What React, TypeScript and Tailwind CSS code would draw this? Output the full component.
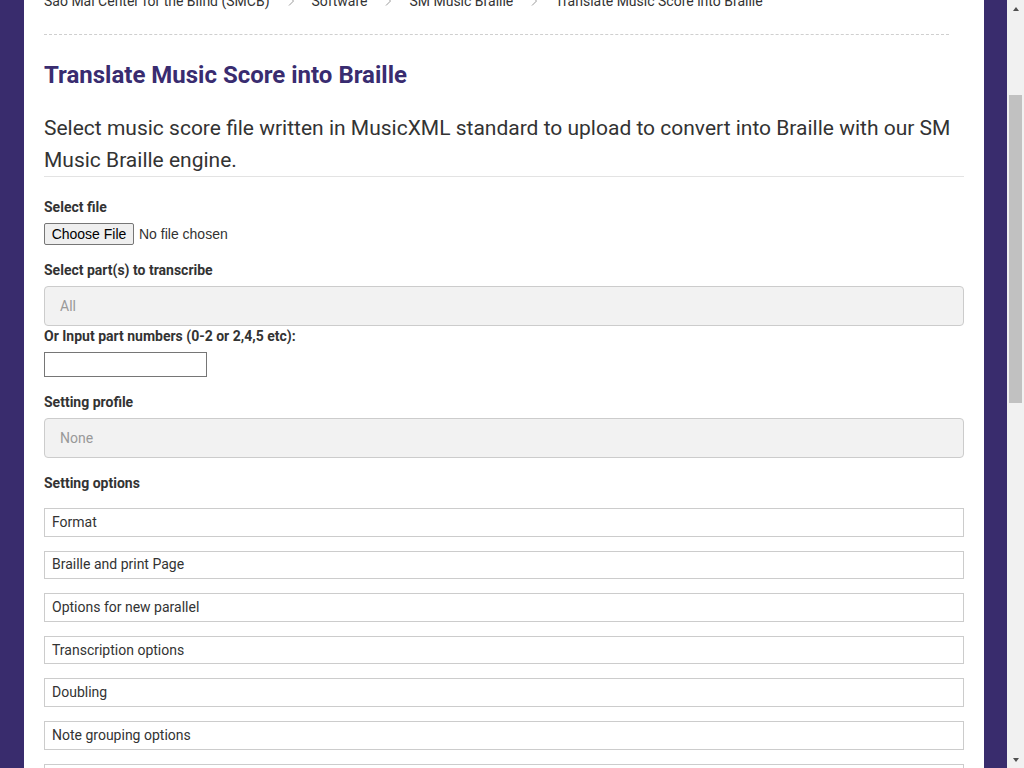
import React from "react";

const Chevron = () => (
  <svg width="10" height="10" viewBox="0 0 10 10" className="mx-[16px] shrink-0" fill="none">
    <path d="M3 0.5 L7.5 5 L3 9.5" stroke="#9a9a9a" strokeWidth="1" />
  </svg>
);

const Label = ({ children }: { children: React.ReactNode }) => (
  <div className="text-[14px] font-bold leading-[21px] mb-[5px] text-[#333]">{children}</div>
);

const options = [
  "Format",
  "Braille and print Page",
  "Options for new parallel",
  "Transcription options",
  "Doubling",
  "Note grouping options",
  "Other options",
];

export default function App() {
  return (
    <div className="flex h-[768px] w-[1024px] overflow-hidden bg-[#392c6d]">
      <div className="w-[24px] shrink-0" />
      <main className="w-[960px] shrink-0 bg-white px-[20px] font-['Roboto',sans-serif] text-[#333]">
        <nav className="-mt-[9px] mr-[15px] flex items-center border-b border-dashed border-[#cfcfcf] pb-[23px] text-[14px] leading-[20px] text-[#333]">
          <span>Sao Mai Center for the Blind (SMCB)</span>
          <Chevron />
          <span>Software</span>
          <Chevron />
          <span>SM Music Braille</span>
          <Chevron />
          <span>Translate Music Score into Braille</span>
        </nav>
        <h1 className="mt-[26px] text-[24px] font-bold leading-[29px] text-[#392c70]">
          Translate Music Score into Braille
        </h1>
        <p className="mt-[22px] border-b border-[#e3e3e3] text-[21px] leading-[32px] text-[#333]">
          Select music score file written in MusicXML standard to upload to convert into Braille with our SM Music Braille engine.
        </p>
        <div className="mt-[20px]">
          <Label>Select file</Label>
          <div className="flex items-center font-['Liberation_Sans',Arial,sans-serif] text-[14px]">
            <button className="flex h-[22px] w-[90px] items-center justify-center rounded-[2px] border border-[#767676] bg-[#efefef] text-black">
              Choose File
            </button>
            <span className="ml-[5px] text-[#333]">No file chosen</span>
          </div>

          <div className="mt-[15px]">
            <Label>Select part(s) to transcribe</Label>
            <div className="flex h-[40px] items-center rounded-[4px] border border-[#ccc] bg-[#f2f2f2] pl-[15px] text-[14px] text-[#999]">
              All
            </div>
          </div>

          <div className="text-[14px] font-bold leading-[21px] mb-[5px] text-[#333]">
            Or Input part numbers (0-2 or 2,4,5 etc):
          </div>
          <div className="h-[25px] w-[163px] border border-[#767676] bg-white" />

          <div className="mt-[15px]">
            <Label>Setting profile</Label>
            <div className="flex h-[40px] items-center rounded-[4px] border border-[#ccc] bg-[#f2f2f2] pl-[15px] text-[14px] text-[#999]">
              None
            </div>
          </div>

          <div className="mt-[15px] text-[14px] font-bold leading-[21px] text-[#333]">Setting options</div>
          <div className="mt-[14px] flex flex-col gap-[14px]">
            {options.map((o) => (
              <div
                key={o}
                className="flex h-[28.6px] items-center border border-[#cccccc] px-[7px] text-[14px] text-[#333]"
              >
                {o}
              </div>
            ))}
          </div>
        </div>
      </main>
      <div className="w-[23px] shrink-0" />
      <div className="flex w-[17px] shrink-0 flex-col items-center bg-[#f1f1f1]">
        <div className="flex h-[17px] w-full items-center justify-center">
          <div className="h-0 w-0 border-x-[3.5px] border-b-[4px] border-x-transparent border-b-[#505050]" />
        </div>
        <div className="mt-[78px] h-[308px] w-[13px] bg-[#c1c1c1]" />
        <div className="flex-1" />
        <div className="flex h-[17px] w-full items-center justify-center">
          <div className="h-0 w-0 border-x-[3.5px] border-t-[4px] border-x-transparent border-t-[#505050]" />
        </div>
      </div>
    </div>
  );
}
